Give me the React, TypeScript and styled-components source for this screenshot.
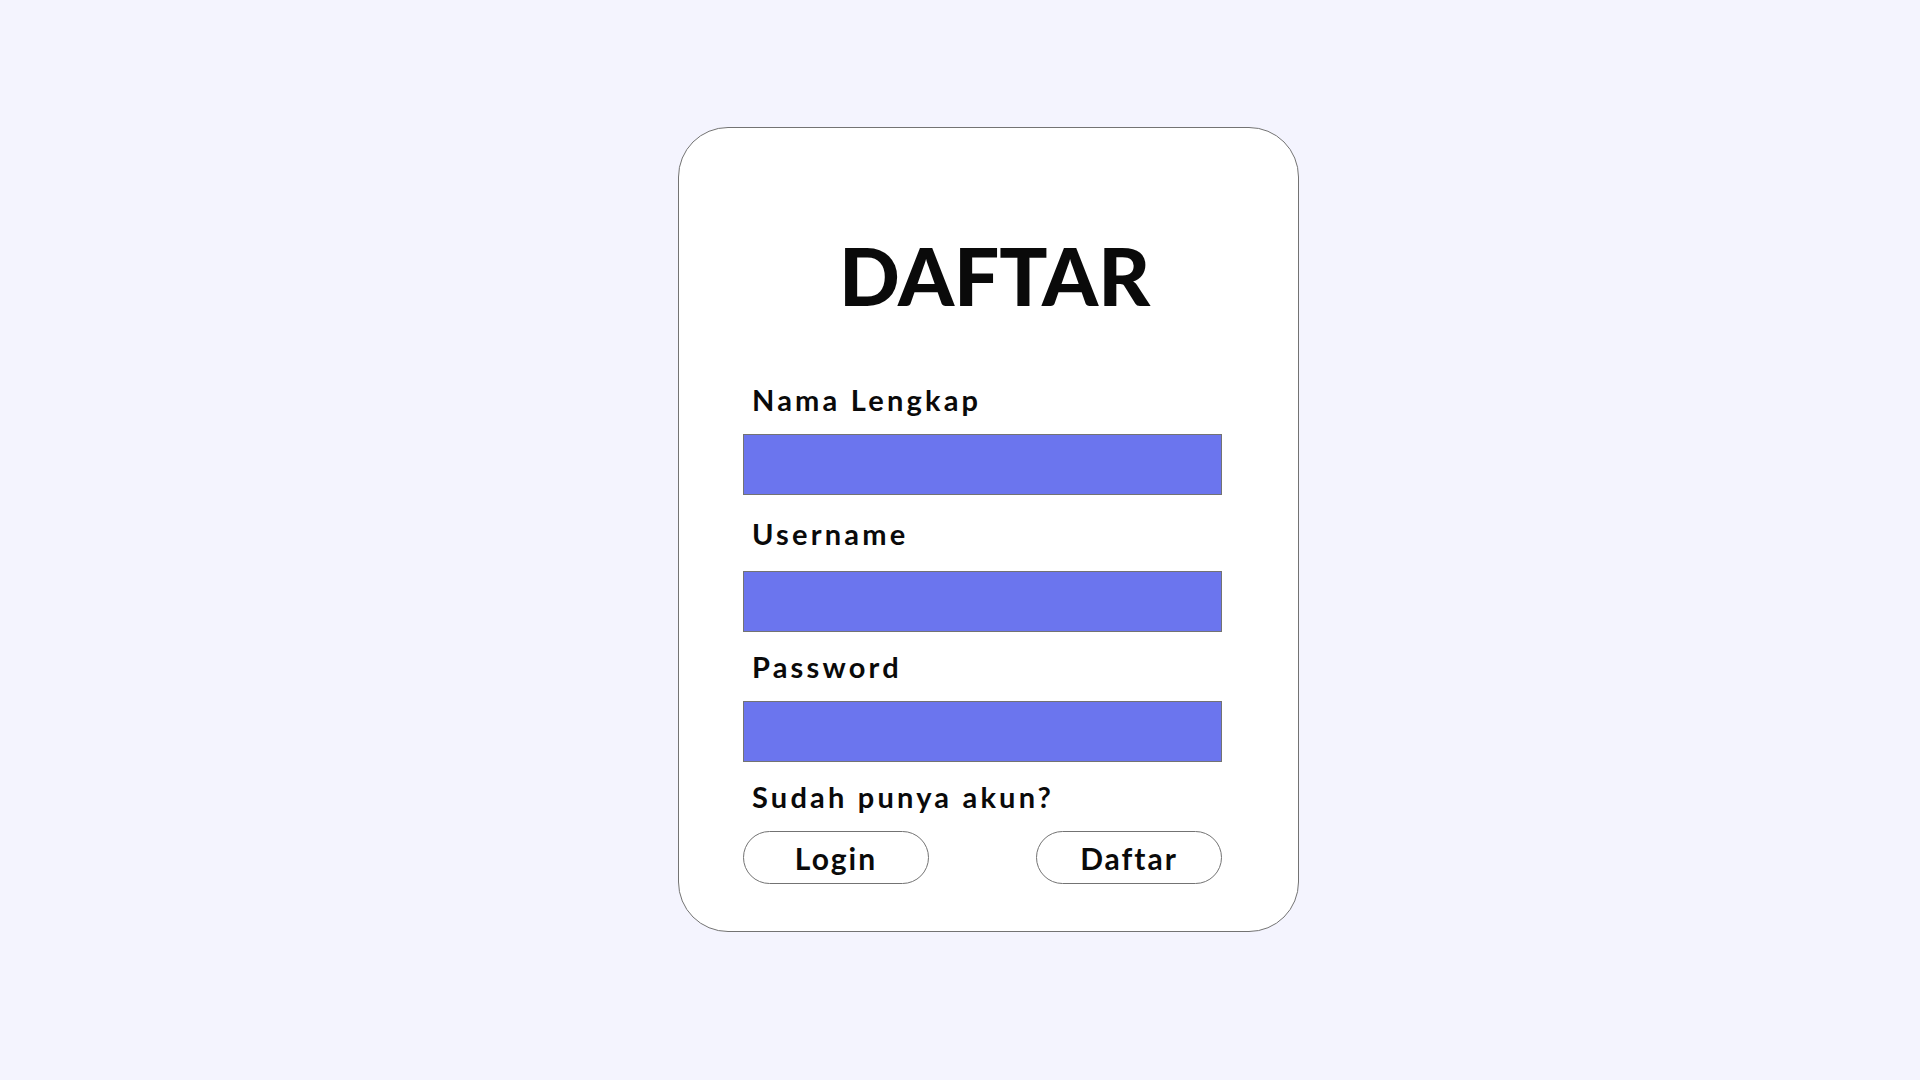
import React from "react";
import styled, { createGlobalStyle } from "styled-components";

const GlobalStyle = createGlobalStyle`
  html, body {
    margin: 0;
    padding: 0;
    background: #f4f4fe;
    font-family: Lato, "Liberation Sans", sans-serif;
  }
  * { box-sizing: border-box; }
`;

const Page = styled.div`
  min-height: 1080px;
  padding: 127px 0 0 678px;
`;

const Card = styled.div`
  width: 621px;
  height: 805px;
  background: #ffffff;
  border: 1px solid #737373;
  border-radius: 50px;
  padding: 107px 76px 0 64px;
  display: flex;
  flex-direction: column;
`;

const Title = styled.h1`
  margin: 0 0 70px 0;
  font-size: 80px;
  line-height: 80px;
  font-weight: 900;
  color: #0a0a0a;
  text-align: center;
  padding-left: 24px;
`;

const Label = styled.label<{ $top?: number; $bottom?: number }>`
  display: block;
  margin: ${(p) => p.$top ?? 0}px 0 ${(p) => p.$bottom ?? 20}px 0;
  padding-left: 9px;
  font-size: 29px;
  line-height: 29px;
  font-weight: 700;
  letter-spacing: 3.2px;
  color: #0a0a0a;
`;

const Input = styled.input`
  display: block;
  width: 479px;
  height: 61px;
  margin: 0;
  border: 1px solid #737373;
  background: #6b75ee;
  outline: none;
  padding: 0 12px;
  font-size: 20px;
  color: #ffffff;
`;

const ButtonRow = styled.div`
  width: 479px;
  display: flex;
  justify-content: space-between;
`;

const PillButton = styled.button`
  width: 186px;
  height: 53px;
  border: 1px solid #737373;
  border-radius: 27px;
  background: #ffffff;
  font-family: Lato, "Liberation Sans", sans-serif;
  font-size: 30px;
  font-weight: 700;
  letter-spacing: 2px;
  color: #0a0a0a;
  padding: 0;
  cursor: pointer;
`;

export default function App() {
  return (
    <>
      <GlobalStyle />
      <Page>
        <Card>
          <Title>DAFTAR</Title>
          <Label>Nama Lengkap</Label>
          <Input type="text" />
          <Label $top={24} $bottom={23}>Username</Label>
          <Input type="text" />
          <Label $top={20}>Password</Label>
          <Input type="password" />
          <Label $top={20}>Sudah punya akun?</Label>
          <ButtonRow>
            <PillButton>Login</PillButton>
            <PillButton>Daftar</PillButton>
          </ButtonRow>
        </Card>
      </Page>
    </>
  );
}
